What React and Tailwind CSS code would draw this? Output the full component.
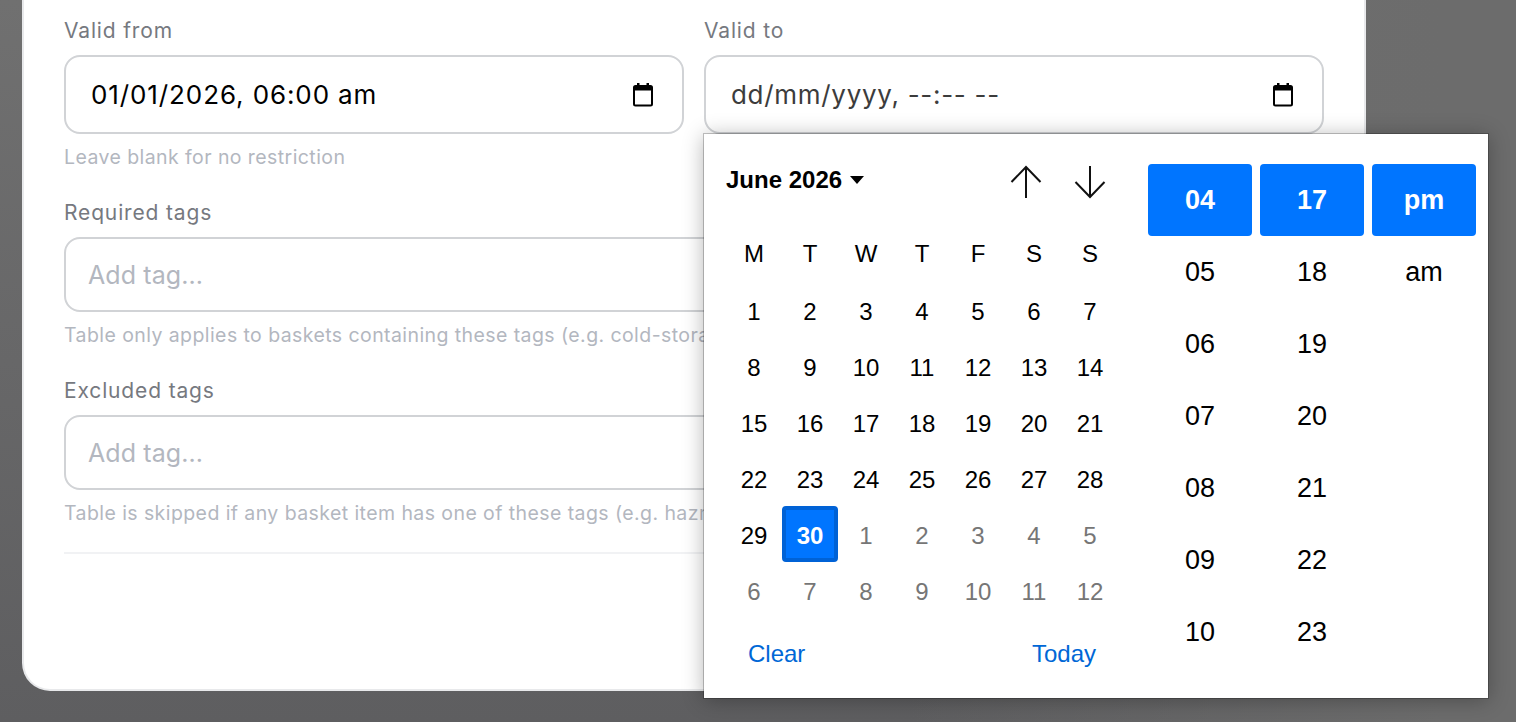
import React from "react";

const weeks = [
  [[1], [2], [3], [4], [5], [6], [7]],
  [[8], [9], [10], [11], [12], [13], [14]],
  [[15], [16], [17], [18], [19], [20], [21]],
  [[22], [23], [24], [25], [26], [27], [28]],
  [[29], [30, "selected"], [1, "muted"], [2, "muted"], [3, "muted"], [4, "muted"], [5, "muted"]],
  [[6, "muted"], [7, "muted"], [8, "muted"], [9, "muted"], [10, "muted"], [11, "muted"], [12, "muted"]],
];

const hours = ["05", "06", "07", "08", "09", "10"];
const minutes = ["18", "19", "20", "21", "22", "23"];

function CalendarIcon() {
  return (
    <svg width="20" height="24" viewBox="0 0 20 24" className="shrink-0">
      <path d="M4 0h2.500v3H4zM13.500 0H16v3h-2.500z" fill="#000" />
      <rect x="1" y="3" width="18" height="19.500" rx="1.500" fill="none" stroke="#000" strokeWidth="2" />
      <rect x="1" y="3" width="18" height="4.500" fill="#000" />
    </svg>
  );
}

function DateInput({ children, suffix, muted }) {
  return (
    <div className={`flex h-[79px] items-center justify-between rounded-[16px] border-2 border-[#d1d3d6] pl-[25px] pr-[29px] text-[26px] ${muted ? "tracking-[0.7px] text-[#3c3c3c]" : "tracking-[0.9px] text-black"}`}>
      <span>
        {children}
        <span className="ml-[8px]">{suffix}</span>
      </span>
      <CalendarIcon />
    </div>
  );
}

function TagInput() {
  return (
    <div className="mt-[8px] flex h-[75px] items-center rounded-[16px] border-2 border-[#d1d3d6] px-[22px] pt-[2px] text-[25px] tracking-[0.1px] text-[#b3b7bf]">
      Add tag...
    </div>
  );
}

function Label({ children }) {
  return <div className="h-[32px] text-[21px] font-normal leading-[32px] tracking-[0.85px] text-[#76797f]">{children}</div>;
}

function Hint({ children }) {
  return <div className="mt-[9px] h-[28px] whitespace-nowrap text-[19.500px] leading-[28px] tracking-[0.42px] text-[#b3b7bf]">{children}</div>;
}

function Arrow({ down }) {
  return (
    <svg width="32" height="34" viewBox="0 0 32 34" fill="none" stroke="#111" strokeWidth="2">
      {down ? <path d="M16 1v31M1.500 17 16 32 30.500 17" /> : <path d="M16 33V2M1.500 17 16 2 30.500 17" />}
    </svg>
  );
}

function DatePopup() {
  return (
    <div className="absolute left-[704px] top-[134px] flex h-[564px] w-[784px] bg-white font-['Liberation_Sans',sans-serif] shadow-[0_0_0_1px_rgba(0,0,0,0.22),0_2px_20px_rgba(0,0,0,0.3)]">
      <div className="w-[444px] pl-[22px]">
        <div className="flex h-[92px] items-center justify-between pr-[42px]">
          <div className="flex items-center gap-[8px] text-[24px] font-bold text-black">
            June 2026
            <svg width="14" height="8" viewBox="0 0 14 8"><path d="M0 0h14L7 8z" fill="#000" /></svg>
          </div>
          <div className="mt-[4px] flex gap-[32px]">
            <Arrow />
            <Arrow down />
          </div>
        </div>
        <div className="grid w-[392px] grid-cols-7 text-[24px] text-black">
          {["M", "T", "W", "T", "F", "S", "S"].map((d, i) => (
            <div key={i} className="flex h-[56px] items-center justify-center">{d}</div>
          ))}
          {weeks.flat().map(([day, kind], i) => (
            <div
              key={i}
              className={`flex h-[56px] items-center justify-center pt-[4px] ${kind === "muted" ? "text-[#767676]" : ""} ${kind === "selected" ? "rounded-[4px] border-4 border-[#0062d6] bg-[#0075ff] font-bold text-white" : ""}`}
            >
              {day}
            </div>
          ))}
        </div>
        <div className="mt-[8px] flex w-[392px] items-center justify-between px-[22px] text-[24px] leading-[56px] text-[#0067d6]">
          <span>Clear</span>
          <span>Today</span>
        </div>
      </div>
      <div className="flex gap-[8px] pt-[30px] text-center text-[27px] text-black">
        <div className="w-[104px]">
          <div className="flex h-[72px] items-center justify-center rounded-[4px] bg-[#0075ff] font-bold text-white">04</div>
          {hours.map((h) => <div key={h} className="flex h-[72px] items-center justify-center">{h}</div>)}
        </div>
        <div className="w-[104px]">
          <div className="flex h-[72px] items-center justify-center rounded-[4px] bg-[#0075ff] font-bold text-white">17</div>
          {minutes.map((m) => <div key={m} className="flex h-[72px] items-center justify-center">{m}</div>)}
        </div>
        <div className="w-[104px]">
          <div className="flex h-[72px] items-center justify-center rounded-[4px] bg-[#0075ff] font-bold text-white">pm</div>
          <div className="flex h-[72px] items-center justify-center">am</div>
        </div>
      </div>
    </div>
  );
}

export default function App() {
  return (
    <div className="relative h-[722px] w-[1516px] overflow-hidden bg-[linear-gradient(90deg,rgba(108,108,108,0)_60%,#6c6c6c_95%),linear-gradient(180deg,#707070,#5e5e60)] pl-[22px] font-['Inter',sans-serif]">
      <div className="h-[691px] w-[1344px] rounded-b-[28px] border-2 border-t-0 border-[#e8e9eb] bg-white px-[40px] pt-[15px]">
        <div className="grid grid-cols-2 gap-[20px]">
          <div>
            <Label>Valid from</Label>
            <div className="mt-[8px]"><DateInput suffix="am">01/01/2026, 06:00</DateInput></div>
            <Hint>Leave blank for no restriction</Hint>
          </div>
          <div>
            <Label>Valid to</Label>
            <div className="mt-[8px]"><DateInput muted suffix="--">dd/mm/yyyy, --:--</DateInput></div>
          </div>
        </div>
        <div className="mt-[26px]">
          <Label>Required tags</Label>
          <TagInput />
          <Hint>Table only applies to baskets containing these tags (e.g. cold-storage)</Hint>
        </div>
        <div className="mt-[26px]">
          <Label>Excluded tags</Label>
          <TagInput />
          <Hint>Table is skipped if any basket item has one of these tags (e.g. hazmat)</Hint>
        </div>
        <div className="mt-[25px] h-[2px] bg-[#f1f2f4]" />
      </div>
      <DatePopup />
    </div>
  );
}
